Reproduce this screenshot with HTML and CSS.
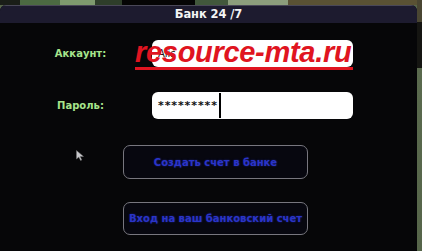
FILE: index.html
```html
<!DOCTYPE html>
<html lang="ru">
<head>
<meta charset="utf-8">
<title>Банк 24/7</title>
<link rel="stylesheet" href="styles.css">
</head>
<body>
<div class="page">
  <div class="top-strip"></div>
  <div class="side-strip"></div>
  <div class="window">
    <div class="titlebar">Банк 24 /7</div>
    <div class="content">
      <div class="form">
        <div class="label">Аккаунт:</div>
        <div class="input"><span class="value small">Alis</span></div>
        <div class="label">Пароль:</div>
        <div class="input"><span class="value">*********</span><span class="caret"></span></div>
      </div>
      <div class="btn btn-first">Создать счет в банке</div>
      <div class="btn btn-second">Вход на ваш банковский счет</div>
    </div>
    <div class="watermark">resource-mta.ru</div>
    <svg class="pointer" width="9" height="11" viewBox="0 0 9 11"><polygon points="0.5,0.5 0.5,9 2.8,7 4.6,10.5 5.8,9.9 4.1,6.5 7.5,6.5" fill="#c8c8cc" stroke="#777" stroke-width="0.5"/></svg>
  </div>
</div>
</body>
</html>
```

FILE: styles.css
```css
* { box-sizing: border-box; }
html, body { margin: 0; padding: 0; }
body {
  width: 422px;
  height: 251px;
  overflow: hidden;
  background: #56654a;
  font-family: "DejaVu Sans", Verdana, sans-serif;
}
.page {
  display: grid;
  grid-template-columns: 417px 5px;
  grid-template-rows: 5px 246px;
  height: 251px;
}
.top-strip {
  grid-column: 1;
  grid-row: 1;
  background: linear-gradient(to right,
    #1a1e18 0, #1a1e18 20px,
    #4c6a42 20px, #4c6a42 60px,
    #7e9a6e 60px, #7e9a6e 95px,
    #2e3e2a 95px, #2e3e2a 122px,
    #050505 122px, #050505 195px,
    #42583c 195px, #42583c 228px,
    #8c9e7c 228px, #8c9e7c 288px,
    #5a5234 288px, #5a5234 417px);
}
.side-strip {
  grid-column: 2;
  grid-row: 1 / span 2;
  background: linear-gradient(to bottom,
    #4a4632 0, #4a4632 22px,
    #151512 22px, #151512 68px,
    #5a6a4e 68px, #56654a 100%);
}
.window {
  grid-column: 1;
  grid-row: 2;
  position: relative;
  background: #060608;
  border-radius: 6px 6px 0 0;
  overflow: hidden;
  display: flex;
  flex-direction: column;
}
.titlebar {
  height: 18px;
  background: #1d1b2f;
  border-top: 1px solid #4a4858;
  color: #f4f4f4;
  font-weight: bold;
  font-size: 11.5px;
  line-height: 17px;
  text-align: center;
  letter-spacing: -0.1px;
}
.content {
  display: flex;
  flex-direction: column;
  padding-top: 17px;
}
.form {
  display: grid;
  grid-template-columns: 152px 201px;
  grid-template-rows: 27px 27px;
  row-gap: 25px;
  align-items: center;
}
.label {
  padding-left: 9px;
  text-align: center;
  color: #a6e48c;
  font-weight: bold;
  font-size: 10px;
}
.input {
  height: 27px;
  background: #ffffff;
  border-radius: 6px;
  display: flex;
  align-items: center;
  padding-left: 6px;
}
.value {
  color: #111;
  font-size: 11px;
  font-weight: bold;
  letter-spacing: 0.9px;
}
.value.small { font-size: 10px; font-weight: normal; letter-spacing: 0; }
.caret {
  width: 2px;
  height: 25px;
  background: #000;
  margin-left: 1px;
}
.btn {
  width: 185px;
  height: 34px;
  margin-left: 123px;
  border: 1px solid #77767e;
  border-radius: 7px;
  background: #07070f;
  color: #2a34c8;
  font-weight: bold;
  font-size: 10px;
  display: flex;
  align-items: center;
  justify-content: center;
  text-shadow: 0 0 2px rgba(40, 50, 200, 0.6);
}
.btn-first { margin-top: 26px; }
.btn-second { margin-top: 23px; height: 33px; }
.watermark {
  position: absolute;
  left: 135px;
  top: 32px;
  width: 218px;
  font-family: "Liberation Sans", Arial, sans-serif;
  font-style: italic;
  font-weight: bold;
  font-size: 29px;
  line-height: 30px;
  color: #e01420;
  border-bottom: 3px solid #e01420;
  letter-spacing: -0.3px;
  white-space: nowrap;
}
.pointer {
  position: absolute;
  left: 76px;
  top: 145px;
}
```
